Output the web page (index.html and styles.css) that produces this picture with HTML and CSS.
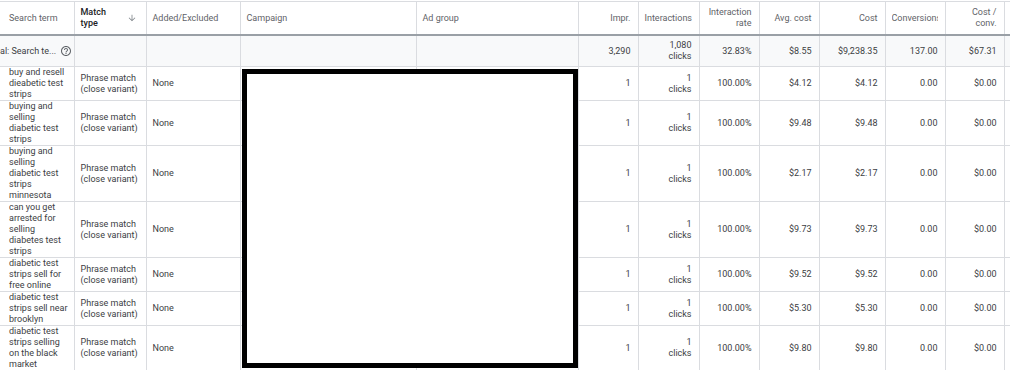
FILE: index.html
```html
<!DOCTYPE html>
<html lang="en">
<head>
<meta charset="utf-8">
<title>Search terms</title>
<link rel="stylesheet" href="styles.css">
</head>
<body>
<div class="report">
  <table class="grid">
    <colgroup>
      <col class="w-term"><col class="w-match"><col class="w-added"><col class="w-campaign"><col class="w-adgroup">
      <col class="w-impr"><col class="w-inter"><col class="w-rate"><col class="w-avg"><col class="w-cost">
      <col class="w-conv"><col class="w-cpconv"><col class="w-extra">
    </colgroup>
    <thead>
      <tr>
        <th class="first">Search term</th>
        <th class="sorted">
          <div class="sort-head">
            <span>Match type</span>
            <svg class="sort-icon" viewBox="0 0 24 24" aria-hidden="true"><path d="M20 12l-1.41-1.41L13 16.17V4h-2v12.17l-5.58-5.59L4 12l8 8 8-8z"/></svg>
          </div>
        </th>
        <th>Added/Excluded</th>
        <th>Campaign</th>
        <th>Ad group</th>
        <th class="num">Impr.</th>
        <th class="num nowrap">Interactions</th>
        <th class="num">Interaction rate</th>
        <th class="num">Avg. cost</th>
        <th class="num">Cost</th>
        <th class="num"><div class="clip">Conversions</div></th>
        <th class="num">Cost / conv.</th>
        <th></th>
      </tr>
    </thead>
    <tbody>
      <tr class="total">
        <td class="first">
          <div class="total-label">
            <span class="total-text">al: Search te...</span>
            <svg class="help-icon" viewBox="0 0 24 24" aria-hidden="true"><path d="M11 18h2v-2h-2v2zm1-16C6.480 2 2 6.48 2 12s4.48 10 10 10 10-4.48 10-10S17.52 2 12 2zm0 18c-4.41 0-8-3.59-8-8s3.59-8 8-8 8 3.59 8 8-3.59 8-8 8zm0-14c-2.21 0-4 1.790-4 4h2c0-1.1.9-2 2-2s2 .9 2 2c0 2-3 1.75-3 5h2c0-2.25 3-2.5 3-5 0-2.21-1.79-4-4-4z"/></svg>
          </div>
        </td>
        <td></td><td></td><td></td><td></td>
        <td class="num">3,290</td>
        <td class="num"><div>1,080</div><div>clicks</div></td>
        <td class="num">32.83%</td>
        <td class="num">$8.55</td>
        <td class="num">$9,238.35</td>
        <td class="num">137.00</td>
        <td class="num">$67.31</td>
        <td></td>
      </tr>
      <tr>
        <td class="first">buy and resell dieabetic test strips</td>
        <td>Phrase match (close variant)</td><td>None</td><td></td><td></td>
        <td class="num">1</td><td class="num"><div>1</div><div>clicks</div></td>
        <td class="num">100.00%</td><td class="num">$4.12</td><td class="num">$4.12</td><td class="num">0.00</td><td class="num">$0.00</td><td></td>
      </tr>
      <tr>
        <td class="first">buying and selling diabetic test strips</td>
        <td>Phrase match (close variant)</td><td>None</td><td></td><td></td>
        <td class="num">1</td><td class="num"><div>1</div><div>clicks</div></td>
        <td class="num">100.00%</td><td class="num">$9.48</td><td class="num">$9.48</td><td class="num">0.00</td><td class="num">$0.00</td><td></td>
      </tr>
      <tr>
        <td class="first">buying and selling diabetic test strips minnesota</td>
        <td>Phrase match (close variant)</td><td>None</td><td></td><td></td>
        <td class="num">1</td><td class="num"><div>1</div><div>clicks</div></td>
        <td class="num">100.00%</td><td class="num">$2.17</td><td class="num">$2.17</td><td class="num">0.00</td><td class="num">$0.00</td><td></td>
      </tr>
      <tr>
        <td class="first">can you get arrested for selling diabetes test strips</td>
        <td>Phrase match (close variant)</td><td>None</td><td></td><td></td>
        <td class="num">1</td><td class="num"><div>1</div><div>clicks</div></td>
        <td class="num">100.00%</td><td class="num">$9.73</td><td class="num">$9.73</td><td class="num">0.00</td><td class="num">$0.00</td><td></td>
      </tr>
      <tr>
        <td class="first">diabetic test strips sell for free online</td>
        <td>Phrase match (close variant)</td><td>None</td><td></td><td></td>
        <td class="num">1</td><td class="num"><div>1</div><div>clicks</div></td>
        <td class="num">100.00%</td><td class="num">$9.52</td><td class="num">$9.52</td><td class="num">0.00</td><td class="num">$0.00</td><td></td>
      </tr>
      <tr>
        <td class="first">diabetic test strips sell near brooklyn</td>
        <td>Phrase match (close variant)</td><td>None</td><td></td><td></td>
        <td class="num">1</td><td class="num"><div>1</div><div>clicks</div></td>
        <td class="num">100.00%</td><td class="num">$5.30</td><td class="num">$5.30</td><td class="num">0.00</td><td class="num">$0.00</td><td></td>
      </tr>
      <tr>
        <td class="first">diabetic test strips selling on the black market</td>
        <td>Phrase match (close variant)</td><td>None</td><td></td><td></td>
        <td class="num">1</td><td class="num"><div>1</div><div>clicks</div></td>
        <td class="num">100.00%</td><td class="num">$9.80</td><td class="num">$9.80</td><td class="num">0.00</td><td class="num">$0.00</td><td></td>
      </tr>
    </tbody>
  </table>
  <div class="redact"></div>
</div>
</body>
</html>
```

FILE: styles.css
```css
html, body {
  margin: 0;
  padding: 0;
  background: #ffffff;
}

body {
  width: 1010px;
  height: 370px;
  overflow: hidden;
  font-family: Roboto, "Liberation Sans", Arial, sans-serif;
  font-size: 9px;
  line-height: 11px;
  color: #3c4043;
}

.report {
  position: relative;
  padding-top: 1px;
}

.grid {
  border-collapse: collapse;
  table-layout: fixed;
  width: 1084px;
}

.w-term { width: 74px; }
.w-match { width: 72px; }
.w-added { width: 94px; }
.w-campaign { width: 176px; }
.w-adgroup { width: 162px; }
.w-impr { width: 60px; }
.w-inter { width: 61px; }
.w-rate { width: 60px; }
.w-avg { width: 60px; }
.w-cost { width: 66px; }
.w-conv { width: 60px; }
.w-cpconv { width: 59px; }
.w-extra { width: 80px; }

.grid th,
.grid td {
  padding: 0 7px 0 6px;
  border-right: 1px solid #dadce0;
  vertical-align: middle;
  text-align: left;
}

.grid th {
  height: 32px;
  font-weight: 400;
  color: #5f6368;
  border-top: 1px solid #dadce0;
  border-bottom: 2px solid #9aa0a6;
}

.grid td {
  border-bottom: 1px solid #dadce0;
}

.grid .num {
  text-align: right;
}

.grid .nowrap {
  white-space: nowrap;
}

.grid .first {
  padding-left: 9px;
  padding-right: 6px;
}

.grid th.sorted {
  color: #202124;
  font-weight: 500;
}

.sort-head {
  display: flex;
  align-items: center;
  gap: 6px;
}

.sort-head span {
  flex: 1;
}

.sort-icon {
  width: 10px;
  height: 10px;
  fill: #80868b;
  margin-right: 2px;
}

.clip {
  overflow: hidden;
  white-space: nowrap;
  text-align: left;
}

.total td {
  height: 30px;
  background: #f8f9fa;
}

.total td.first {
  padding-left: 0;
  padding-right: 2px;
}

.total-label {
  display: flex;
  align-items: center;
}

.total-text {
  flex: 1;
  white-space: nowrap;
  overflow: hidden;
}

.help-icon {
  width: 12px;
  height: 12px;
  fill: #5f6368;
  flex-shrink: 0;
}

.redact {
  position: absolute;
  left: 242px;
  top: 69px;
  width: 326px;
  height: 289px;
  border: 5px solid #000000;
  background: #ffffff;
}
```
